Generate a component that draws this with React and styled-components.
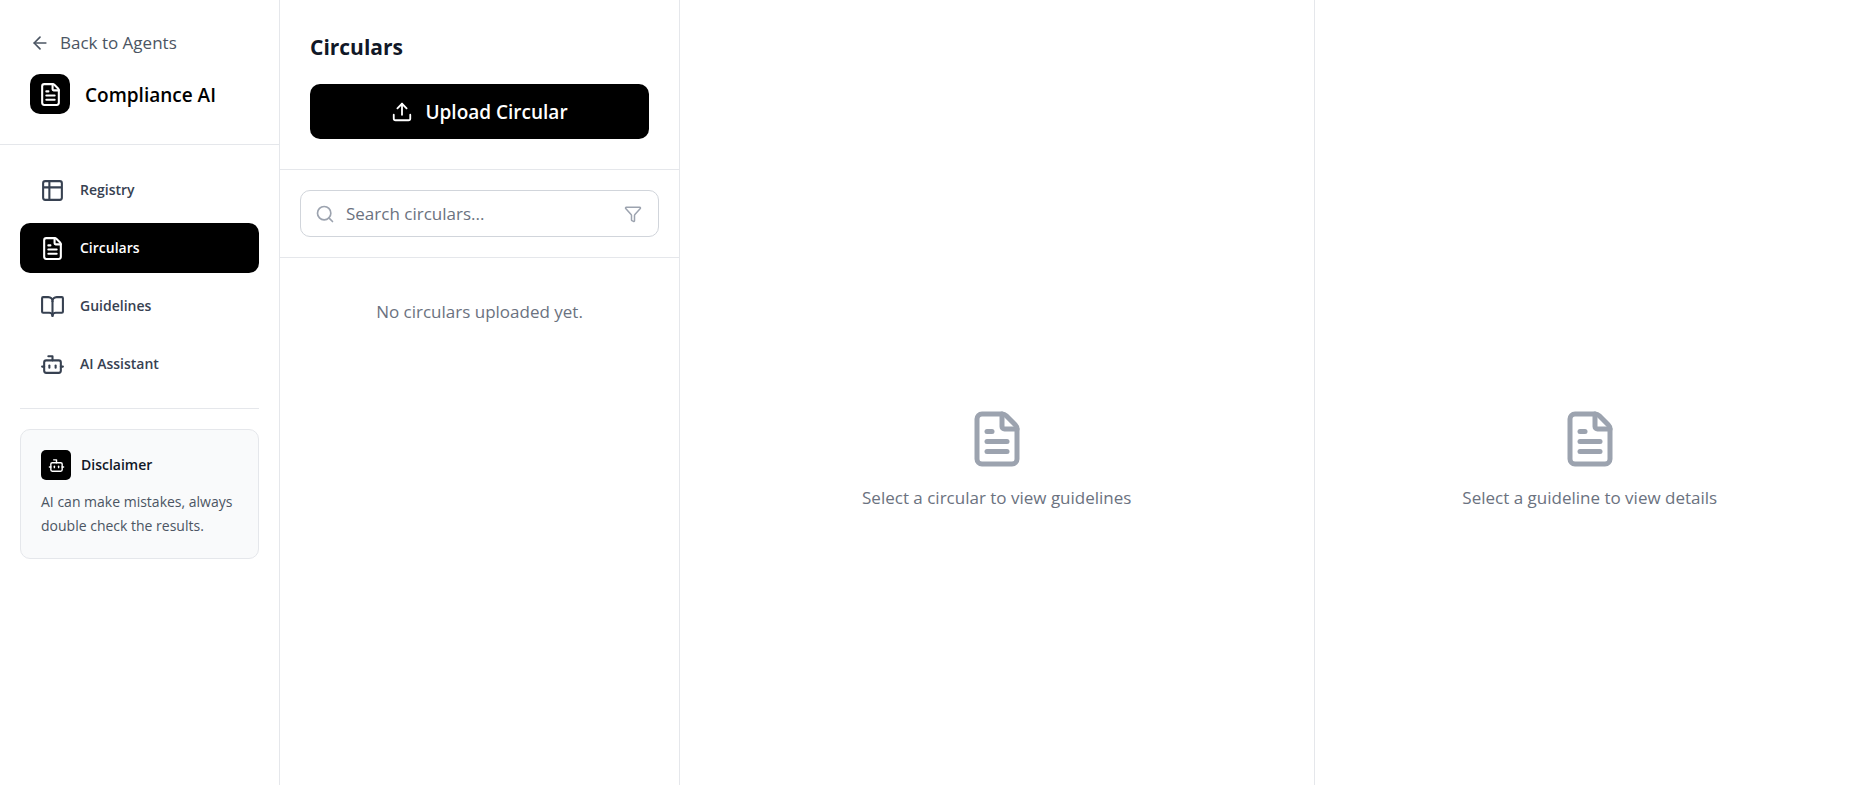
import React, { useState } from "react";
import styled, { createGlobalStyle } from "styled-components";
import {
  ArrowLeft,
  BookOpen,
  Bot,
  FileText,
  Funnel,
  Search,
  Table2,
  Upload,
} from "lucide-react";

const GlobalStyle = createGlobalStyle`
  *, *::before, *::after { box-sizing: border-box; }
  body {
    margin: 0;
    background: #fff;
    color: #111827;
    font-family: "Segoe UI", "Open Sans", "Noto Sans", sans-serif;
    font-size: 17px;
    line-height: 28px;
  }
  h1, h2, h3, p { margin: 0; }
  button, input { font: inherit; color: inherit; }
  svg { display: block; flex: none; }
`;

const Layout = styled.div`
  display: grid;
  grid-template-columns: 280px 400px minmax(0, 25fr) minmax(0, 22fr);
  min-height: 100vh;
`;

const Sidebar = styled.aside`
  border-right: 1px solid #e5e7eb;
`;

const Brand = styled.header`
  display: flex;
  flex-direction: column;
  gap: 16px;
  padding: 28px 30px 30px;
  border-bottom: 1px solid #e5e7eb;
`;

const BackLink = styled.a`
  display: flex;
  align-items: center;
  gap: 10px;
  height: 30px;
  color: #4b5563;
  text-decoration: none;
`;

const BrandRow = styled.div`
  display: flex;
  align-items: center;
  gap: 15px;
`;

const IconTile = styled.span`
  display: grid;
  place-items: center;
  width: ${(p) => p.$size}px;
  height: ${(p) => p.$size}px;
  border-radius: ${(p) => p.$radius}px;
  background: #000;
  color: #fff;
`;

const BrandName = styled.h1`
  padding-top: 2px;
  font-size: 19px;
  font-weight: 600;
  color: #000;
`;

const SidebarBody = styled.div`
  padding: 20px;
`;

const Nav = styled.nav`
  display: flex;
  flex-direction: column;
  gap: 8px;
  padding-bottom: 19px;
  border-bottom: 1px solid #e5e7eb;
`;

const NavItem = styled.button`
  display: flex;
  align-items: center;
  gap: 15px;
  height: 50px;
  padding: 0 20px;
  border: 0;
  border-radius: 10px;
  background: ${(p) => (p.$active ? "#000" : "transparent")};
  color: ${(p) => (p.$active ? "#fff" : "#374151")};
  font-size: 14px;
  font-weight: 600;
  cursor: pointer;
`;

const Notice = styled.section`
  margin-top: 20px;
  padding: 20px;
  border: 1px solid #e5e7eb;
  border-radius: 10px;
  background: #f9fafb;
`;

const NoticeHead = styled.div`
  display: flex;
  align-items: center;
  gap: 10px;
  margin-bottom: 10px;
`;

const NoticeTitle = styled.h3`
  font-size: 14px;
  font-weight: 600;
`;

const NoticeText = styled.p`
  margin-right: -8px;
  color: #4b5563;
  font-size: 14px;
  line-height: 24px;
`;

const ListPanel = styled.section`
  border-right: 1px solid #e5e7eb;
`;

const ListHeader = styled.header`
  padding: 30px;
  border-bottom: 1px solid #e5e7eb;
`;

const ListTitle = styled.h2`
  margin-bottom: 20px;
  font-size: 21px;
  font-weight: 700;
  line-height: 34px;
`;

const UploadButton = styled.button`
  display: flex;
  align-items: center;
  justify-content: center;
  gap: 12px;
  width: 100%;
  height: 55px;
  border: 0;
  border-radius: 10px;
  background: #000;
  color: #fff;
  font-size: 19px;
  font-weight: 600;
  cursor: pointer;
`;

const SearchBar = styled.div`
  padding: 20px;
  border-bottom: 1px solid #e5e7eb;
`;

const SearchField = styled.label`
  display: flex;
  align-items: center;
  gap: 11px;
  height: 47px;
  padding: 0 14px;
  border: 1px solid #d1d5db;
  border-radius: 10px;
  color: #9ca3af;
`;

const SearchInput = styled.input`
  flex: 1;
  min-width: 0;
  padding: 0;
  border: 0;
  outline: 0;
  background: none;
  color: #111827;
  &::placeholder { color: #6b7280; opacity: 1; }
`;

const FilterButton = styled.button`
  padding: 2px;
  border: 0;
  background: none;
  color: #9ca3af;
  cursor: pointer;
`;

const ListEmpty = styled.p`
  padding: 40px;
  color: #6b7280;
  text-align: center;
`;

const DetailPanel = styled.section`
  display: flex;
  flex-direction: column;
  align-items: center;
  justify-content: center;
  gap: 15px;
  padding-top: 136px;
  color: #9ca3af;
  & + & {
    padding-right: 6px;
    border-left: 1px solid #e5e7eb;
  }
`;

const Hint = styled.p`
  color: #6b7280;
`;

const NAV = [
  { label: "Registry", Icon: Table2 },
  { label: "Circulars", Icon: FileText },
  { label: "Guidelines", Icon: BookOpen },
  { label: "AI Assistant", Icon: Bot },
];

export default function App() {
  const [active, setActive] = useState("Circulars");
  const [query, setQuery] = useState("");

  return (
    <>
      <GlobalStyle />
      <Layout>
        <Sidebar>
          <Brand>
            <BackLink href="#agents">
              <ArrowLeft size={20} />
              Back to Agents
            </BackLink>
            <BrandRow>
              <IconTile $size={40} $radius={10}>
                <FileText size={25} />
              </IconTile>
              <BrandName>Compliance AI</BrandName>
            </BrandRow>
          </Brand>
          <SidebarBody>
            <Nav>
              {NAV.map(({ label, Icon }) => (
                <NavItem
                  key={label}
                  type="button"
                  $active={label === active}
                  onClick={() => setActive(label)}
                >
                  <Icon size={25} />
                  {label}
                </NavItem>
              ))}
            </Nav>
            <Notice>
              <NoticeHead>
                <IconTile $size={30} $radius={5}>
                  <Bot size={17} />
                </IconTile>
                <NoticeTitle>Disclaimer</NoticeTitle>
              </NoticeHead>
              <NoticeText>
                AI can make mistakes, always double check the results.
              </NoticeText>
            </Notice>
          </SidebarBody>
        </Sidebar>

        <ListPanel>
          <ListHeader>
            <ListTitle>Circulars</ListTitle>
            <UploadButton type="button">
              <Upload size={22} />
              Upload Circular
            </UploadButton>
          </ListHeader>
          <SearchBar>
            <SearchField>
              <Search size={20} />
              <SearchInput
                type="text"
                aria-label="Search circulars"
                placeholder="Search circulars..."
                value={query}
                onChange={(e) => setQuery(e.target.value)}
              />
              <FilterButton type="button" aria-label="Filter circulars">
                <Funnel size={18} />
              </FilterButton>
            </SearchField>
          </SearchBar>
          <ListEmpty>No circulars uploaded yet.</ListEmpty>
        </ListPanel>

        <DetailPanel>
          <FileText size={60} />
          <Hint>Select a circular to view guidelines</Hint>
        </DetailPanel>
        <DetailPanel>
          <FileText size={60} />
          <Hint>Select a guideline to view details</Hint>
        </DetailPanel>
      </Layout>
    </>
  );
}
